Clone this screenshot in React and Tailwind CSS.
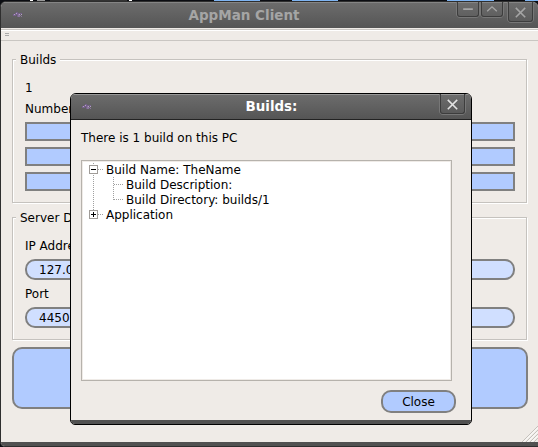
import React from "react";

function AppIcon() {
  return (
    <svg className="block" width="12" height="10" viewBox="0 0 12 10" fill="none" shapeRendering="crispEdges">
      <path d="M0 5h3v2h-3zM2 4h2v2h-2zM3 3h1v1h-1zM4 3h1v5h-1zM5 4h2v1h-2zM7 4h2v1h-2z" fill="#75608a" />
      <path d="M5 5h1v3h-1zM6 5h1v3h-1zM8 7h1v1h-1zM7 6h1v1h-1z" fill="#8a769c" />
      <path d="M3 4h1v1h-1zM6 5h1v1h-1zM8 5h1v1h-1zM1 5h1v1h-1z" fill="#b3a1c3" />
    </svg>
  );
}

function TitleButton({ className, children, color }) {
  return (
    <div className={`box-border rounded-b-[3px] border border-t-0 border-[#3d3d3d] shadow-[0_1px_0_#777,1px_0_0_#777,-1px_0_0_#777] ${className}`}>
      <svg className="block h-full w-full" viewBox="0 0 22 16" fill="none" stroke={color} strokeWidth="1.5">
        {children}
      </svg>
    </div>
  );
}

function Group({ title, className, children }) {
  return (
    <div className={`relative box-border w-[515px] border border-[#c5c2be] shadow-[1px_1px_0_#fff,inset_1px_1px_0_#fff] ${className}`}>
      <span className="absolute -top-[8px] left-[3px] bg-[#efebe7] px-[4px] leading-[16px]">{title}</span>
      {children}
    </div>
  );
}

function Field({ children }) {
  return (
    <div className="box-border flex h-[21px] w-[490px] items-center rounded-[10px] border-2 border-[#808080] bg-[#d0dfff] pl-[12px]">
      {children}
    </div>
  );
}

const bar = "h-[19px] w-[490px] border-2 border-[#808080] bg-[#b1cbff]";

function Tree() {
  return (
    <div className="relative mt-[14px] h-[221px] w-[371px] border border-[#b6b2ac] bg-white pl-[24px] pt-[2px] shadow-[inset_0_0_0_1px_#efebe7]">
      <svg className="absolute left-0 top-0" width="45" height="62" fill="none" shapeRendering="crispEdges">
        <path d="M11.5 2V50M16 8.5H22M31.5 16V39M32 23.5H42M32 38.5H42M16 53.5H22" stroke="#a0a0a0" strokeDasharray="1 1" />
        <path d="M7.500 4.500h8v8h-8zM7.500 49.500h8v8h-8z" fill="#fff" stroke="#a09c98" />
        <path d="M9 8.500h5M9 53.500h5M11.500 51v5" stroke="#000" />
      </svg>
      <div className="h-[15px] leading-[15px]">Build Name: TheName</div>
      <div className="h-[15px] pl-[20px] leading-[15px]">Build Description:</div>
      <div className="h-[15px] pl-[20px] leading-[15px]">Build Directory: builds/1</div>
      <div className="h-[15px] leading-[15px]">Application</div>
    </div>
  );
}

function Dialog() {
  return (
    <div className="absolute left-[70px] top-[93px] flex h-[332px] w-[402px] flex-col overflow-hidden rounded-t-[6px] rounded-b-[5px] border border-black bg-[#efebe7]">
      <div className="flex h-[26px] shrink-0 items-start border-b border-b-[#222] bg-linear-to-b from-[#6d6d6d] to-[#555] shadow-[inset_0_1px_0_#999]">
        <div className="ml-[11px] mt-[7px] w-[12px]"><AppIcon /></div>
        <div className="mt-[5px] flex-1 pl-[9px] text-center text-[13.4px] leading-[16px] font-bold text-white">Builds:</div>
        <TitleButton className="mr-[6px] h-[20px] w-[25px]" color="#e2e2e2">
          <path d="M6.500 4.500l9 9M15.500 4.500l-9 9" />
        </TitleButton>
      </div>
      <div className="flex-1 pl-[10px] pt-[11px]">
        <div className="leading-[15px]">There is 1 build on this PC</div>
        <Tree />
        <div className="ml-[300px] mt-[9px] flex h-[23px] w-[75px] items-center justify-center rounded-[10px] border-2 border-[#808080] bg-[#b1cbff]">Close</div>
      </div>
      <div className="h-[4px] shrink-0 bg-[#515151]" />
    </div>
  );
}

export default function App() {
  return (
    <div className="relative flex h-[447px] w-[538px] flex-col overflow-hidden bg-[#0b0d12] font-['DejaVu_Sans',sans-serif] text-[12px] whitespace-nowrap text-black">
      <div className="flex h-px shrink-0">
        <div className="ml-[30px] w-[3px] bg-white" />
        <div className="ml-[4px] w-[8px] bg-[#999]" />
        <div className="ml-[5px] w-[77px] bg-[#333]" />
        <div className="ml-[2px] w-[3px] bg-white" />
        <div className="ml-[82px] w-[46px] bg-[#7eb4f2]" />
        <div className="ml-[32px] w-[46px] bg-[#7eb4f2]" />
        <div className="ml-[109px] w-[47px] bg-[#7eb4f2]" />
        <div className="ml-[31px] w-[13px] bg-[#7eb4f2]" />
      </div>
      <div className="flex flex-1 flex-col overflow-hidden rounded-t-[6px] rounded-bl-[5px] border-l border-t border-b border-[#2e2e2e] bg-[#efebe7]">
        <div className="flex h-[26px] shrink-0 items-start bg-linear-to-b from-[#6d6d6d] to-[#555] shadow-[inset_0_1px_0_#858585]">
          <div className="ml-[12px] mt-[7px] w-[12px]"><AppIcon /></div>
          <div className="mt-[5px] flex-1 pl-[7px] text-center text-[13.5px] leading-[16px] font-bold text-[#a5a5a5]">AppMan Client</div>
          <TitleButton className="ml-[1px] h-[15px] w-[22px]" color="#a5a5a5">
            <path d="M5.500 8h11" strokeWidth="2" />
          </TitleButton>
          <TitleButton className="ml-[2px] h-[15px] w-[22px]" color="#a5a5a5">
            <path d="M5.500 10.500l5.500-5 5.500 5" />
          </TitleButton>
          <TitleButton className="ml-[5px] mr-[5px] h-[20px] w-[25px]" color="#a5a5a5">
            <path d="M6.500 4.500l9 9M15.500 4.500l-9 9" />
          </TitleButton>
        </div>
        <div className="flex h-[13px] shrink-0 flex-col border-b border-b-[#c9c6c2] shadow-[inset_0_1px_0_#efebe7,inset_0_2px_0_#c9c6c2,inset_0_3px_0_#fff]">
          <div className="ml-[4px] mt-[5px] h-[3px] w-[4px] border-y border-[#aaa]" />
        </div>
        <div className="flex flex-1 flex-col pl-[11px] pt-[18px]">
          <Group title="Builds" className="h-[144px] pl-[12px] pt-[21px]">
            <div className="h-[21px] leading-[15px]">1</div>
            <div className="h-[20px] leading-[15px]">Number of builds</div>
            <div className="flex flex-col gap-[6px]">
              <div className={bar} />
              <div className={bar} />
              <div className={bar} />
            </div>
          </Group>
          <Group title="Server Details" className="mt-[14px] h-[123px] pl-[12px] pt-[21px]">
            <div className="h-[20px] leading-[15px]">IP Address</div>
            <Field>127.0.0.1</Field>
            <div className="mt-[7px] h-[20px] leading-[15px]">Port</div>
            <Field>4450</Field>
          </Group>
          <div className="mt-[7px] h-[62px] w-[516px] rounded-[10px] border-2 border-[#808080] bg-[#b1cbff]" />
        </div>
        <div className="flex h-[16px] shrink-0 justify-end">
          <svg width="16" height="16" fill="none">
            <path d="M0 16L16 0M4 16L16 4M8 16L16 8M12 16L16 12" stroke="#c5c1bc" />
            <path d="M1.500 16L16 1.500M5.500 16L16 5.500M9.500 16L16 9.500" stroke="#fff" />
          </svg>
        </div>
        <div className="h-[4px] shrink-0 bg-[#515151]" />
      </div>
      <Dialog />
    </div>
  );
}
